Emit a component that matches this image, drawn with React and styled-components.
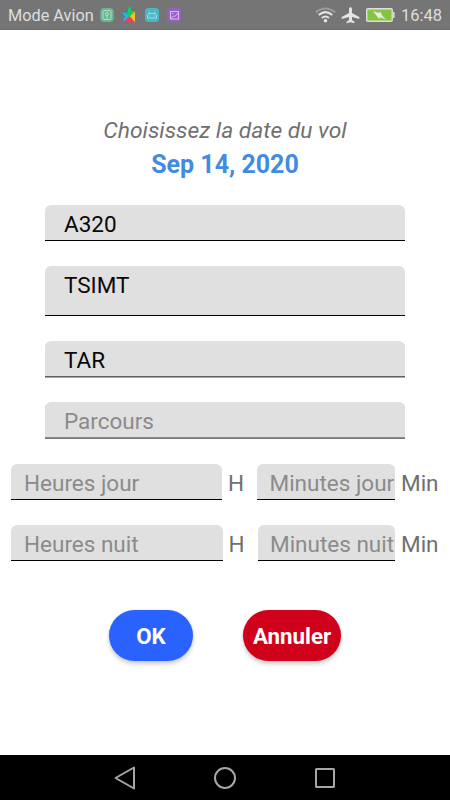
import React from "react";
import styled, { createGlobalStyle } from "styled-components";

const GlobalStyle = createGlobalStyle`
    * {
        box-sizing: border-box;
    }
    body {
        margin: 0;
        background: #ffffff;
        font-family: Roboto, sans-serif;
    }
`;

const Screen = styled.div`
    width: 450px;
    height: 800px;
    display: flex;
    flex-direction: column;
    overflow: hidden;
    background: #ffffff;
`;

const StatusBar = styled.header`
    height: 30px;
    flex: none;
    display: flex;
    align-items: center;
    justify-content: space-between;
    padding: 1px 8px 0;
    background: #757575;
    border-bottom: 1px solid #6c6a6c;
    color: #dedede;
    white-space: nowrap;
`;

const StatusGroup = styled.div`
    display: flex;
    align-items: center;
`;

const StatusText = styled.span`
    width: ${({ $width }) => $width}px;
    padding-top: 2px;
    font-size: ${({ $size }) => $size}px;
    line-height: 26px;
`;

const AppIcons = styled.svg`
    width: 84px;
    height: 18px;
    margin-left: 6px;
`;

const SystemIcons = styled.svg`
    width: 84px;
    height: 20px;
    margin-right: 2px;
`;

const Content = styled.main`
    flex: 1;
    display: flex;
    flex-direction: column;
    align-items: center;
    padding-top: 84px;
`;

const Prompt = styled.div`
    height: 34px;
    line-height: 33px;
    font-size: 22.8px;
    font-style: italic;
    color: #707070;
    white-space: nowrap;
`;

const DateValue = styled.div`
    height: 32px;
    line-height: 33px;
    font-size: 25px;
    font-weight: 700;
    color: #418ce2;
    white-space: nowrap;
`;

const Form = styled.div`
    width: 100%;
    display: flex;
    flex-direction: column;
    align-items: center;
    gap: 25px;
    padding-top: 25px;
`;

const Field = styled.div`
    width: ${({ $width }) => $width || 360}px;
    height: ${({ $height }) => $height || 36.2}px;
    flex: none;
    padding-left: ${({ $inset }) => $inset || 19}px;
    border-radius: 6px 6px 0 0;
    border-bottom: 1px solid #000000;
    background: #e0e0e0;
    color: ${({ $filled }) => ($filled ? "#080808" : "#8b8b8b")};
    font-size: 22.5px;
    line-height: 38px;
    white-space: nowrap;
    overflow: hidden;
`;

const SoftField = styled(Field)`
    border-bottom: 1px solid #606060;
    box-shadow: 0 1px 0 #a5a5a5;
`;

const RouteField = styled(Field)`
    margin-bottom: 1px;
    border-bottom: 1px solid #8c8c8c;
    box-shadow: 0 1px 0 #777777;
`;

const TimeRow = styled.div`
    width: 100%;
    height: 36.2px;
    display: flex;
    padding-left: 11px;
`;

const Unit = styled.span`
    width: ${({ $width }) => $width}px;
    padding-left: 6px;
    color: #707070;
    font-size: 22.5px;
    line-height: 38px;
`;

const Actions = styled.div`
    width: 100%;
    display: flex;
    gap: 50px;
    padding: 49px 0 0 109px;
`;

const ActionButton = styled.button`
    width: ${({ $width }) => $width}px;
    height: 51px;
    padding: 2px 0 0;
    border: 0;
    border-radius: 26px;
    background: ${({ $color }) => $color};
    box-shadow: 0 3px 4px rgba(0, 0, 0, 0.2), 0 0 2px rgba(0, 0, 0, 0.1);
    color: #ffffff;
    font-family: Roboto, sans-serif;
    font-size: 22.3px;
    font-weight: 700;
    white-space: nowrap;
`;

const NavBar = styled.nav`
    height: 45px;
    flex: none;
    display: flex;
    align-items: center;
    justify-content: center;
    gap: 76px;
    background: #000000;
`;

const NavIcon = styled.svg`
    width: 24px;
    height: 24px;
    fill: none;
    stroke: #a6a6a6;
    stroke-width: 2;
    stroke-linejoin: round;
`;

const NotificationIcons = () => (
    <AppIcons viewBox="0 0 84 18" fill="none">
        <rect x="1.2" y="2" width="13.6" height="14" rx="4" fill="#68b590" />
        <g stroke="#b5dec8" strokeWidth="1">
            <rect x="4" y="4.5" width="8" height="9" rx="1" />
            <circle cx="8" cy="8" r="1.5" />
            <path d="M8 9.5v3" />
        </g>
        <path d="M24.5 5.5h5L30.5 10z" fill="#2876d2" />
        <path d="M24.5 5.5v10.5l6-6z" fill="#20b9e9" />
        <path d="M24.5 16.2h11.5l-5.5-6.2z" fill="#ef4053" />
        <path d="M30.5 10l5.5-4.5v10.7z" fill="#f4be27" />
        <path d="M29 1.5h3v3.5h4l-5.5 5.5-4-4.5H29z" fill="#13ce67" />
        <circle cx="24.7" cy="10.8" r="1.6" fill="#757575" />
        <rect x="46" y="2" width="14" height="14" rx="3.5" fill="#4db5c2" />
        <path d="M48.5 12V10Q48.5 7.5 51 7.5h4Q57.5 7.5 57.5 10v2zM50 5.5l1.2 2M56 5.5l-1.2 2" stroke="#a3dee4" />
        <path d="M50.7 10h1M54.3 10h1" stroke="#a3dee4" />
        <rect x="68.2" y="2" width="14" height="14" rx="3.5" fill="#965fc3" />
        <g stroke="#ddc2ed" strokeWidth="1">
            <rect x="71.5" y="5.5" width="8" height="7.5" />
            <path d="M72 12.5l2.7-2.7 1.3.7 3-3.5M73.2 7.5h1.3" />
        </g>
    </AppIcons>
);

const ConnectionIcons = () => (
    <SystemIcons viewBox="0 0 84 20" fill="none">
        <path d="M.8 7.2Q10.5 0 20.2 7.2" stroke="#9b9b9b" strokeWidth="2" />
        <path d="M3.7 10Q10.5 4.2 17.3 10M6.9 13Q10.5 10 14.1 13" stroke="#e2e2e2" strokeWidth="2" />
        <circle cx="10.5" cy="15.8" r="1.8" fill="#e2e2e2" />
        <path d="M34 3.5Q35.5 .5 37 3.5V8l7.3 4v2L37 12v3l2.5 1.8V18.2L35.5 17.2l-4 1v-1.4L34 15v-3l-7.3 2v-2L34 8z" fill="#e4e4e4" />
        <rect x="51.7" y="3.7" width="25.5" height="12.6" rx="1" fill="#85c43f" stroke="#dedede" strokeWidth="1.4" />
        <path d="M78.8 7v6" stroke="#dedede" strokeWidth="1.5" />
        <path d="M58 6l6 2 1-1.5 2.5 4.5 3.5 3.5-6-2.2-1 1.7-3-4z" fill="#e8eddf" />
    </SystemIcons>
);

const TimeInput = ({ hours, minutes, night }) => (
    <TimeRow>
        <Field $width={night ? 211.5 : 211} $inset={13}>{hours}</Field>
        <Unit $width={35}>H</Unit>
        <Field $width={night ? 137.5 : 138} $inset={12.5}>{minutes}</Field>
        <Unit $width={54}>Min</Unit>
    </TimeRow>
);

const App = () => {
    return (
        <Screen>
            <GlobalStyle />
            <StatusBar>
                <StatusGroup>
                    <StatusText $width={85} $size={16.3}>Mode Avion</StatusText>
                    <NotificationIcons />
                </StatusGroup>
                <StatusGroup>
                    <ConnectionIcons />
                    <StatusText $width={41} $size={16.5}>16:48</StatusText>
                </StatusGroup>
            </StatusBar>
            <Content>
                <Prompt>Choisissez la date du vol</Prompt>
                <DateValue>Sep 14, 2020</DateValue>
                <Form>
                    <Field $filled>A320</Field>
                    <Field $filled $height={50}>TSIMT</Field>
                    <SoftField $filled>TAR</SoftField>
                    <RouteField $height={35.2}>Parcours</RouteField>
                    <TimeInput hours="Heures jour" minutes="Minutes jour" />
                    <TimeInput hours="Heures nuit" minutes="Minutes nuit" night />
                </Form>
                <Actions>
                    <ActionButton $width={84} $color="#2962ff">OK</ActionButton>
                    <ActionButton $width={98} $color="#d0021b">Annuler</ActionButton>
                </Actions>
            </Content>
            <NavBar>
                <NavIcon viewBox="0 0 24 24">
                    <path d="M21 1.5v21L2.5 12z" />
                </NavIcon>
                <NavIcon viewBox="0 0 24 24">
                    <circle cx="12" cy="12" r="10" />
                </NavIcon>
                <NavIcon viewBox="0 0 24 24">
                    <rect x="3" y="3" width="18" height="18" rx="0.5" />
                </NavIcon>
            </NavBar>
        </Screen>
    );
};

export default App;
